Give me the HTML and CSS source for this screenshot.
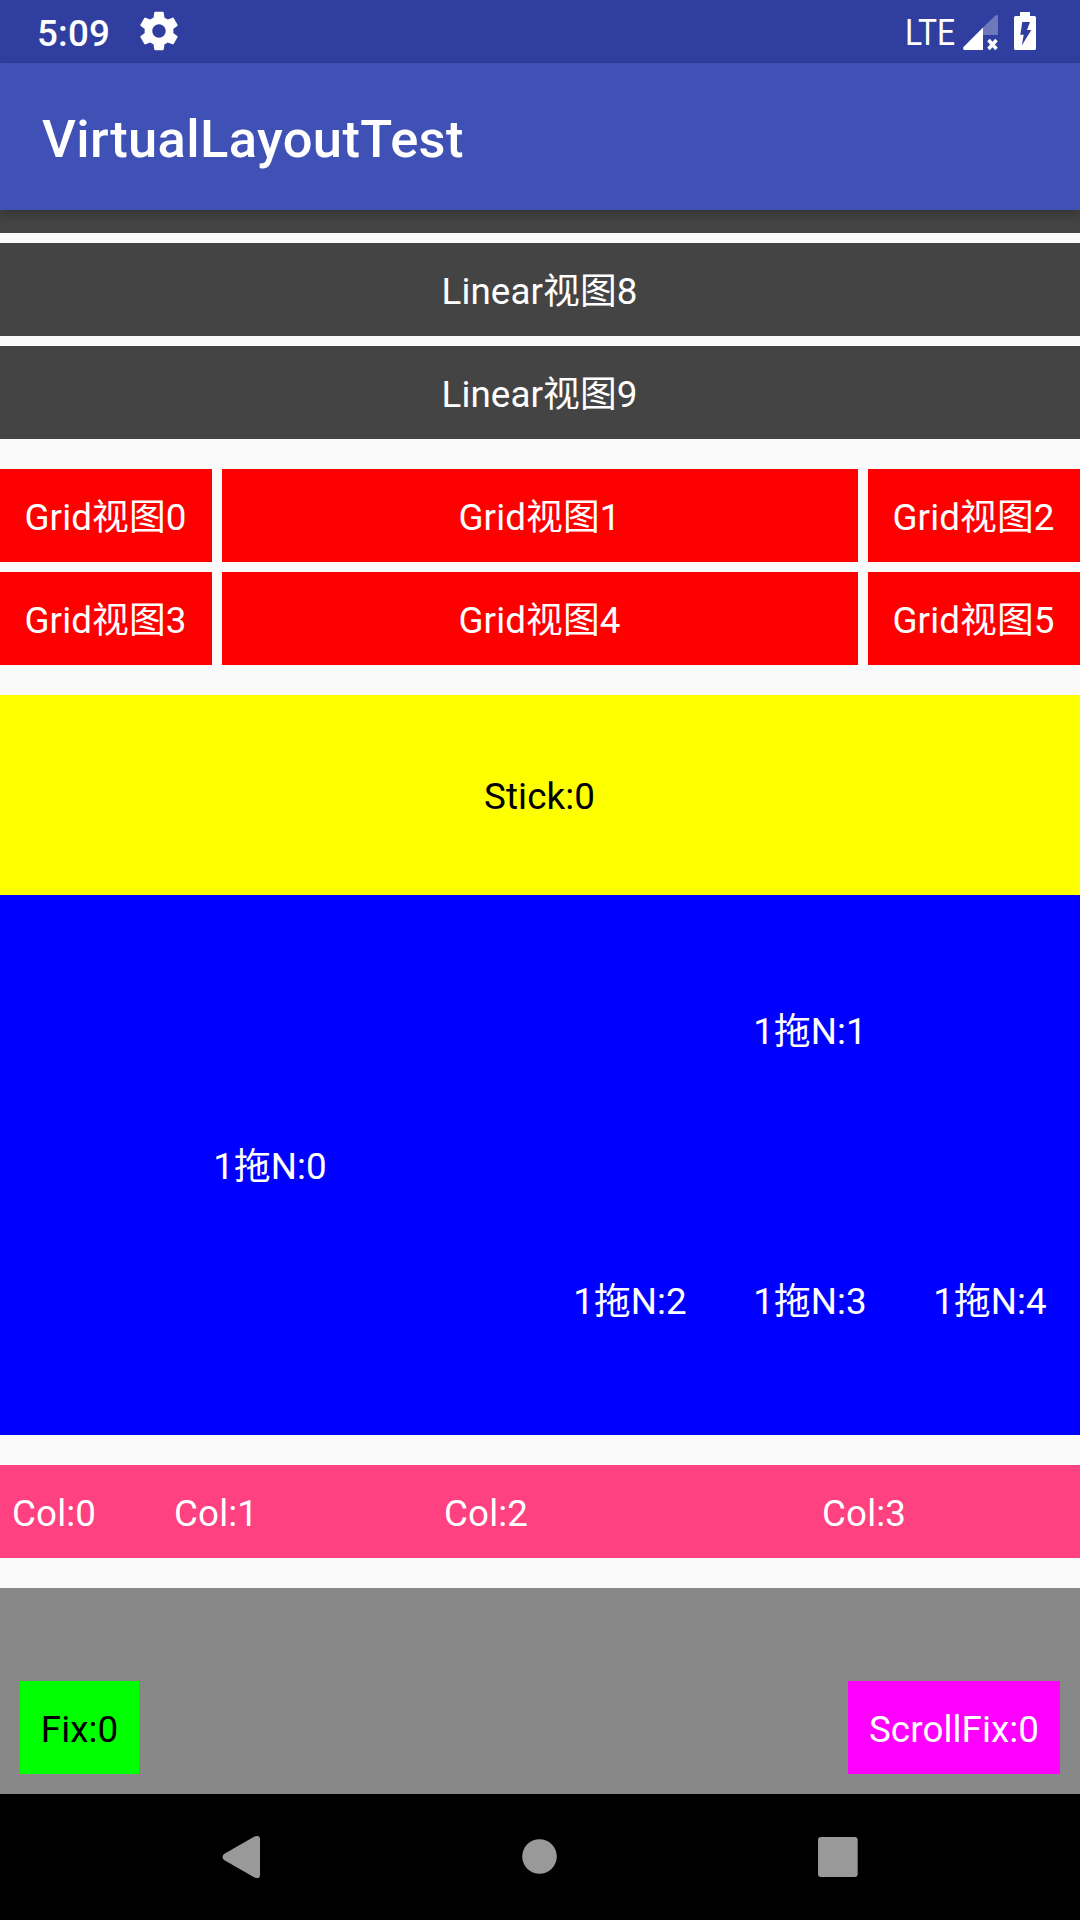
FILE: index.html
```html
<!DOCTYPE html>
<html lang="zh-CN">
<head>
<meta charset="utf-8">
<title>VirtualLayoutTest</title>
<link rel="stylesheet" href="styles.css">
</head>
<body>
<div class="screen">
  <header class="status-bar">
    <span class="clock">5:09</span>
    <svg class="gear" viewBox="0 0 24 24"><path d="M19.43 12.98c.04-.32.07-.64.07-.98s-.03-.66-.07-.98l2.11-1.65c.19-.15.24-.42.12-.64l-2-3.46c-.12-.22-.39-.3-.61-.22l-2.49 1c-.52-.4-1.08-.73-1.69-.98l-.38-2.65C14.46 2.18 14.25 2 14 2h-4c-.25 0-.46.18-.49.42l-.38 2.65c-.61.25-1.17.59-1.69.98l-2.49-1c-.23-.09-.49 0-.61.22l-2 3.46c-.13.22-.07.49.12.64l2.11 1.65c-.04.32-.07.65-.07.98s.03.66.07.98l-2.11 1.65c-.19.15-.24.42-.12.64l2 3.46c.12.22.39.3.61.22l2.49-1c.52.4 1.08.73 1.69.98l.38 2.65c.03.24.24.42.49.42h4c.25 0 .46-.18.49-.42l.38-2.65c.61-.25 1.17-.59 1.69-.98l2.49 1c.23.09.49 0 .61-.22l2-3.46c.12-.22.07-.49-.12-.64l-2.11-1.65zM12 15.5c-1.93 0-3.5-1.57-3.5-3.5s1.57-3.5 3.5-3.5 3.5 1.57 3.5 3.5-1.57 3.5-3.5 3.5z"/></svg>
    <svg class="network" viewBox="0 0 80 63"><text class="network-label" x="14" y="45" textLength="50" lengthAdjust="spacingAndGlyphs">LTE</text></svg>
    <svg class="signal" viewBox="0 0 36 63">
      <path opacity=".3" d="M20 27.5 32.5 15.5Q35 14 35 16.5V35H20z"/>
      <path d="M20 27.5V50H1Q-.5 49 .5 47z"/>
      <path class="signal-cross" d="M25.5 40 33.5 49M33.5 40 25.5 49"/>
    </svg>
    <svg class="battery" viewBox="0 0 22 63"><path fill-rule="evenodd" d="M6 12H16V16H20.5Q22 16 22 17.5V48.5Q22 50 20.5 50H1.5Q0 50 0 48.5V17.5Q0 16 1.5 16H6zM8.3 22 6.3 34.7H9.7L7.8 45.5 17.3 30H13L16 22z"/></svg>
  </header>
  <div class="app-bar"><h1 class="title">VirtualLayoutTest</h1></div>

  <main class="content">
    <section class="linear">
      <div class="linear-item cut"></div>
      <div class="cell linear-item">Linear视图8</div>
      <div class="cell linear-item">Linear视图9</div>
    </section>
    <section class="grid">
      <div class="cell grid-item">Grid视图0</div>
      <div class="cell grid-item">Grid视图1</div>
      <div class="cell grid-item">Grid视图2</div>
      <div class="cell grid-item">Grid视图3</div>
      <div class="cell grid-item">Grid视图4</div>
      <div class="cell grid-item">Grid视图5</div>
    </section>
    <section class="cell sticky">Stick:0</section>
    <section class="one-plus-n">
      <div class="cell lead">1拖N:0</div>
      <div class="cell wide">1拖N:1</div>
      <div class="cell">1拖N:2</div>
      <div class="cell">1拖N:3</div>
      <div class="cell">1拖N:4</div>
    </section>
    <section class="columns">
      <div class="cell">Col:0</div>
      <div class="cell">Col:1</div>
      <div class="cell">Col:2</div>
      <div class="cell">Col:3</div>
    </section>
    <section class="footer">
      <div class="cell fix">Fix:0</div>
      <div class="cell scroll-fix">ScrollFix:0</div>
    </section>
  </main>

  <nav class="nav-bar">
    <svg class="nav-icon" viewBox="0 0 60 60"><path d="M13 27 43.500 9.500Q49 7.500 49 12V48Q49 52.500 43.500 50.500L13 33Q10 30 13 27z"/></svg>
    <svg class="nav-icon" viewBox="0 0 60 60"><circle cx="29.500" cy="29.500" r="17.300"/></svg>
    <svg class="nav-icon" viewBox="0 0 60 60"><rect x="9" y="10" width="39.700" height="40" rx="3"/></svg>
  </nav>
</div>
</body>
</html>
```
FILE: styles.css
```css
body {
  margin: 0;
}

.screen {
  width: 1080px;
  height: 1920px;
  display: flex;
  flex-direction: column;
  overflow: hidden;
  background: #fafafa;
  color: #fff;
  font: 36.75px/43px Roboto, "Noto Sans CJK SC", sans-serif;
}

.status-bar {
  height: 63px;
  flex: none;
  display: flex;
  align-items: center;
  background: #303f9f;
  padding: 0 44px 0 37px;
}

.status-bar svg {
  fill: #fff;
  height: 63px;
}

.clock {
  width: 99px;
  font-weight: 500;
  padding-top: 3px;
  letter-spacing: .2px;
}

.status-bar .gear {
  width: 46px;
  height: 46px;
  margin-bottom: 1px;
}

.network {
  width: 80px;
  margin-left: auto;
}

.network-label {
  font-size: 37px;
  font-weight: 400;
}

.signal {
  width: 36px;
  margin-left: -8px;
}

.signal-cross {
  fill: none;
  stroke: #fff;
  stroke-width: 3.5;
}

.battery {
  width: 22px;
  margin-left: 15px;
}

.app-bar {
  height: 147px;
  flex: none;
  display: flex;
  align-items: center;
  padding-left: 42px;
  background: #3f51b5;
  box-shadow: 0 4px 10px rgba(0, 0, 0, .28);
  z-index: 1;
}

.title {
  margin: 0;
  padding-top: 4px;
  font-size: 52.5px;
  line-height: 62px;
  font-weight: 500;
  letter-spacing: .36px;
}

.content {
  flex: 1;
  display: flex;
  flex-direction: column;
  gap: 30px;
}

.cell {
  box-sizing: border-box;
  min-height: 93px;
  padding-top: 3px;
  display: flex;
  align-items: center;
  justify-content: center;
  white-space: nowrap;
  letter-spacing: .1px;
}

.linear {
  display: grid;
  gap: 10px;
}

.linear-item {
  background: #444;
}

.linear-item,
.grid-item,
.sticky {
  padding-right: 1px;
}

.cut {
  height: 23px;
}

.grid {
  display: grid;
  grid-template-columns: 212px 636px 212px;
  gap: 10px;
}

.grid-item {
  background: #f00;
}

.sticky {
  height: 200px;
  background: #ff0;
  color: #000;
}

.one-plus-n {
  height: 540px;
  margin-top: -30px;
  display: grid;
  grid-template-columns: 3fr 1fr 1fr 1fr;
  grid-template-rows: 1fr 1fr;
  background: #00f;
}

.lead {
  grid-row: span 2;
}

.wide {
  grid-column: span 3;
}

.columns {
  display: grid;
  grid-template-columns: 1fr 2fr 3fr 4fr;
  background: #ff4081;
}

.footer {
  flex: 1;
  display: flex;
  justify-content: space-between;
  align-items: flex-end;
  padding: 0 20px 20px;
  background: #888;
}

.fix {
  width: 119px;
  background: #0f0;
  color: #000;
}

.scroll-fix {
  width: 212px;
  background: #f0f;
}

.nav-bar {
  height: 126px;
  flex: none;
  display: flex;
  justify-content: center;
  align-items: center;
  gap: 239px;
  background: #000;
}

.nav-icon {
  width: 60px;
  height: 60px;
  fill: #999;
}
```
